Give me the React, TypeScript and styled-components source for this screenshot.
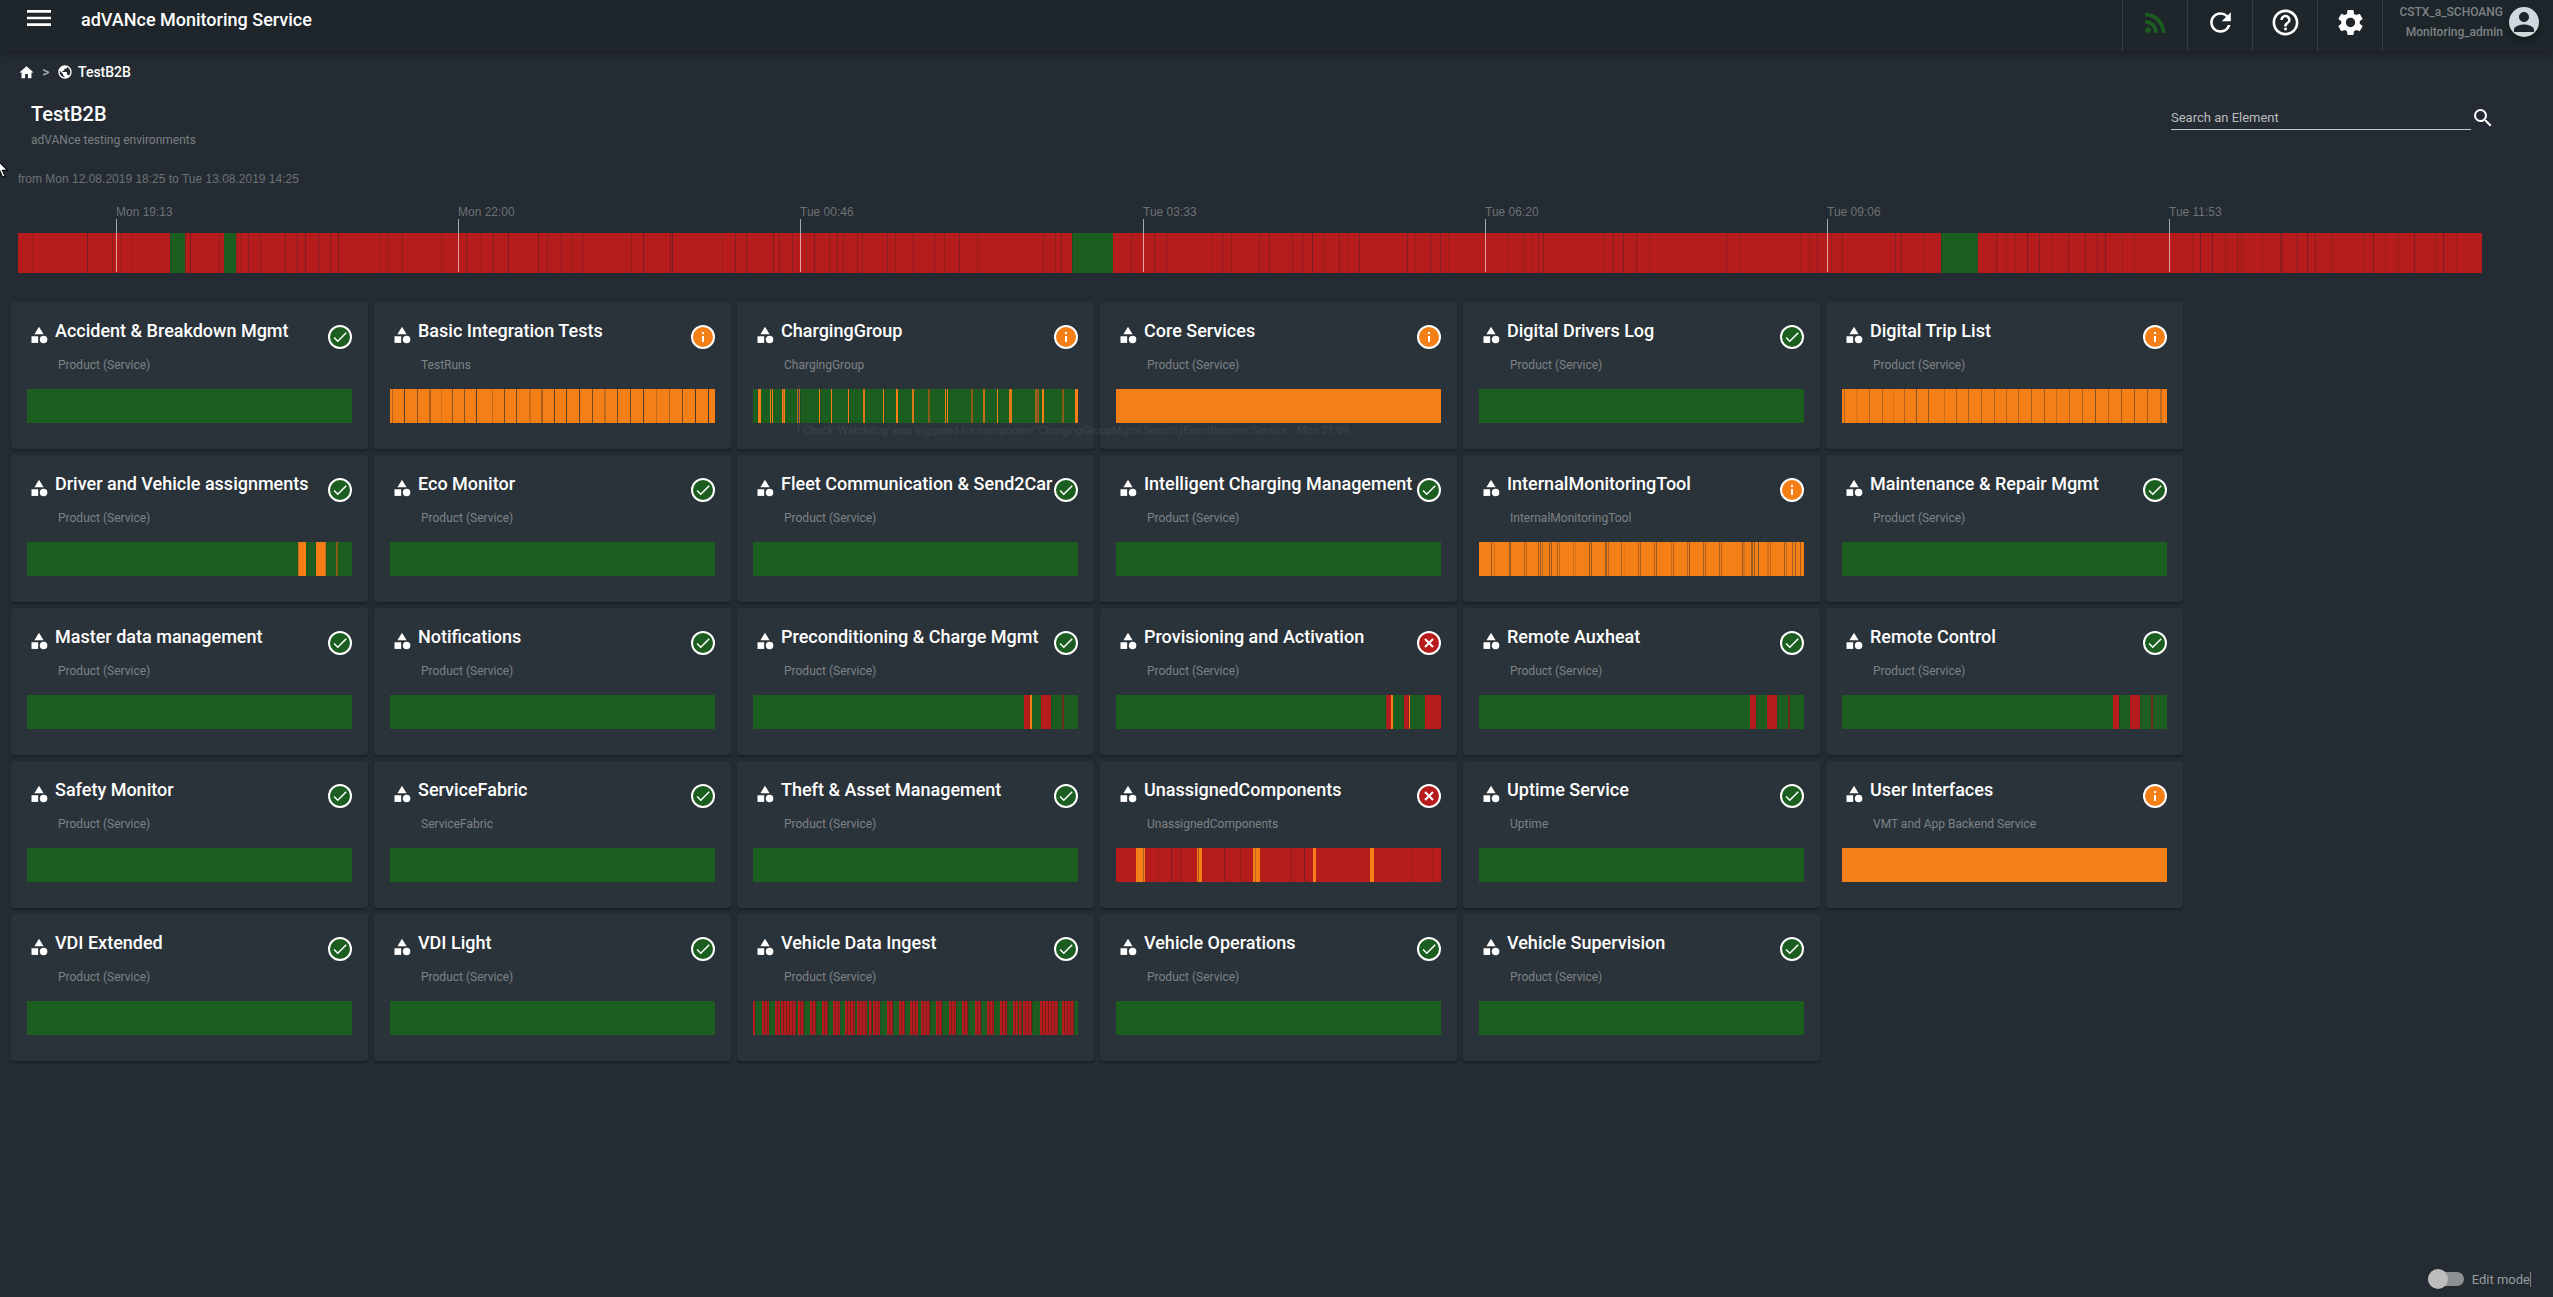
import React from 'react';
import styled, { createGlobalStyle } from 'styled-components';
import {
  MdCategory,
  MdCheck,
  MdHelpOutline,
  MdHome,
  MdMenu,
  MdPerson,
  MdPublic,
  MdRefresh,
  MdRssFeed,
  MdSearch,
  MdSettings,
} from 'react-icons/md';

const GREEN = '#1b5e20';
const RED = '#b71c1c';
const ORANGE = '#f57f17';
const BROWN = '#8a5a1b';
const MAROON = '#6f2a1c';

type Status = 'ok' | 'warn' | 'error';
/** start, width, fill */
type Segment = [number, number, string];
/** position, darkness (0..1), optional width */
type Line = [number, number, number?];

interface Timeline {
  base: string;
  segments?: Segment[];
  lines?: Line[];
}

interface Service {
  name: string;
  type: string;
  status: Status;
  timeline: Timeline;
  note?: string;
}

const GlobalStyle = createGlobalStyle`
  *, *::before, *::after { box-sizing: border-box; }
  body {
    margin: 0;
    background: #242b32;
    color: #fff;
    font-family: Roboto, "Liberation Sans", sans-serif;
    font-size: 14px;
  }
  h1, h2, p { margin: 0; }
  button { font: inherit; color: inherit; background: none; border: 0; padding: 0; cursor: pointer; }
`;

const Page = styled.div`
  position: relative;
  display: flex;
  flex-direction: column;
  min-height: 100vh;
  overflow: hidden;
`;

const Header = styled.header`
  display: flex;
  align-items: flex-start;
  height: 51px;
  padding-left: 23px;
  background: #1e262b;
  box-shadow: 0 2px 10px rgba(0, 0, 0, 0.35);
`;

const MenuButton = styled.button`
  display: flex;
  padding-top: 2px;
`;

const AppTitle = styled.h1`
  flex: 1;
  padding-left: 26px;
  font-size: 18px;
  font-weight: 500;
  line-height: 40px;
`;

const HeaderButton = styled.button<{ $color?: string }>`
  display: flex;
  align-items: center;
  justify-content: center;
  width: 65px;
  height: 51px;
  padding-bottom: 7px;
  border-left: 1px solid #353c41;
  color: ${(p) => p.$color ?? '#fff'};
`;

const UserButton = styled.button`
  display: flex;
  align-items: flex-start;
  justify-content: flex-end;
  gap: 6px;
  width: 171px;
  height: 51px;
  padding: 2px 14px 0 0;
  border-left: 1px solid #353c41;
  color: #7d8285;
  font-size: 12px;
  font-weight: 500;
  line-height: 20px;
  text-align: right;
`;

const UserLine = styled.span`
  display: block;
`;

const Avatar = styled.span`
  display: flex;
  margin-top: 5px;
  width: 30px;
  height: 30px;
  border-radius: 50%;
  background: #cfd8dc;
  color: #1e262b;
  box-shadow: 0 3px 6px rgba(0, 0, 0, 0.4);
`;

const Breadcrumb = styled.nav`
  display: flex;
  align-items: center;
  height: 20px;
  margin: 11px 0 0 18px;
  font-weight: 500;
`;

const Crumb = styled.a`
  display: flex;
  align-items: center;
  gap: 5px;
  color: #fff;
  text-decoration: none;
`;

const CrumbSeparator = styled.span`
  width: 22px;
  text-align: center;
  color: #a9adb0;
  font-size: 14px;
`;

const Intro = styled.section`
  display: flex;
  justify-content: space-between;
  padding: 20px 58px 0 31px;
`;

const PageTitle = styled.h2`
  font-size: 20px;
  font-weight: 500;
  line-height: 24px;
`;

const PageSubtitle = styled.p`
  padding-top: 4px;
  color: #7b8083;
  font-size: 12px;
  line-height: 20px;
`;

const Search = styled.form`
  display: flex;
  align-items: flex-start;
  padding-top: 4px;
`;

const SearchInput = styled.input`
  width: 300px;
  height: 24px;
  padding: 0;
  border: 0;
  border-bottom: 1px solid #c6c9cb;
  border-radius: 0;
  outline: 0;
  background: transparent;
  color: #fff;
  font: 400 13px Roboto, sans-serif;
  &::placeholder { color: #b9bcbe; opacity: 1; }
`;

const SearchButton = styled.button`
  display: flex;
`;

const History = styled.section`
  padding: 19px 71px 0 18px;
  font-family: "Liberation Sans", Arial, sans-serif;
  font-size: 12px;
  line-height: 20px;
  color: #6d7275;
`;

const HistoryChart = styled.div`
  position: relative;
  padding-top: 44px;
`;

const HourMark = styled.div`
  position: absolute;
  top: 13px;
  height: 70px;
  white-space: nowrap;
  &::after {
    content: '';
    position: absolute;
    left: 0;
    top: 17px;
    bottom: 0;
    width: 1px;
    background: rgba(255, 255, 255, 0.6);
  }
`;

const Track = styled.svg<{ $height: number }>`
  display: block;
  width: 100%;
  height: ${(p) => p.$height}px;
`;

const Grid = styled.main`
  display: grid;
  grid-template-columns: repeat(auto-fill, 357px);
  gap: 6px;
  padding: 29px 71px 0 11px;
`;

const Card = styled.article`
  position: relative;
  padding: 16px 16px 26px;
  border-radius: 4px;
  background: #2b333a;
  box-shadow: 0 2px 2px rgba(0, 0, 0, 0.25);
`;

const CardHead = styled.div`
  display: flex;
  align-items: flex-start;
  gap: 6px;
  height: 31px;
  padding-left: 2px;
`;

const CardIcon = styled(MdCategory)`
  flex: none;
  margin-top: 7px;
`;

const CardTitle = styled.h2`
  flex: 1;
  min-width: 0;
  font-size: 18px;
  font-weight: 500;
  line-height: 26px;
  white-space: nowrap;
`;

const CardType = styled.p`
  padding: 6px 0 14px 31px;
  color: #7d8286;
  font-size: 12px;
  line-height: 20px;
`;

const Badge = styled.span<{ $color: string }>`
  display: flex;
  flex: none;
  align-items: center;
  justify-content: center;
  width: 24px;
  height: 24px;
  margin-top: 7px;
  border: 2px solid #fff;
  border-radius: 50%;
  background: ${(p) => p.$color};
`;

const Note = styled.div`
  position: absolute;
  z-index: 1;
  left: 61px;
  top: 83px;
  height: 49px;
  padding: 37px 0 0 4px;
  border-left: 1px solid #3b434a;
  color: #3b434a;
  font: 11px/18px Roboto, "Liberation Sans", sans-serif;
  white-space: nowrap;
  pointer-events: none;
`;

const Footer = styled.footer`
  display: flex;
  justify-content: flex-end;
  margin-top: auto;
  padding: 0 22px 8px;
`;

const Toggle = styled.label`
  display: flex;
  align-items: center;
  gap: 8px;
  height: 20px;
  color: #979b9e;
  font-size: 13px;
`;

const ToggleText = styled.span`
  border-right: 1px solid #7b8083;
`;

const Switch = styled.input`
  appearance: none;
  position: relative;
  width: 36px;
  height: 14px;
  margin: 0;
  border-radius: 7px;
  background: #8b9093;
  &::before {
    content: '';
    position: absolute;
    left: 0;
    top: -3px;
    width: 20px;
    height: 20px;
    border-radius: 50%;
    background: #bdbdbd;
  }
  &:checked::before { left: 16px; }
`;

const Pointer = styled.svg`
  position: absolute;
  left: -5px;
  top: 158px;
  pointer-events: none;
`;

const hourMarks = [
  ['Mon 19:13', 98],
  ['Mon 22:00', 440],
  ['Tue 00:46', 782],
  ['Tue 03:33', 1125],
  ['Tue 06:20', 1467],
  ['Tue 09:06', 1809],
  ['Tue 11:53', 2151],
] as const;

const HISTORY_SPAN = 2464;
const CARD_SPAN = 325;

const history: Timeline = {
  base: RED,
  segments: [
    [152, 15, GREEN],
    [206, 12, GREEN],
    [1054, 41, GREEN],
    [1923, 37, GREEN],
  ],
  lines: [
    [14, 0.15], [69, 0.4], [94, 0.3], [102, 0.2], [114, 0.12], [152, 0.3], [167, 0.3], [172, 0.4], [184, 0.12],
    [201, 0.3], [218, 0.3], [222, 0.2], [230, 0.3], [242, 0.3], [257, 0.08], [267, 0.35], [279, 0.35], [287, 0.4],
    [300, 0.35], [312, 0.3], [320, 0.4], [344, 0.05], [362, 0.2], [370, 0.25], [384, 0.25], [423, 0.25],
    [430, 0.06], [448, 0.35], [462, 0.12], [475, 0.35], [490, 0.4], [520, 0.4], [529, 0.3], [543, 0.3],
    [553, 0.25], [564, 0.3], [613, 0.25], [625, 0.4], [633, 0.1], [652, 0.4], [654, 0.4], [704, 0.2], [717, 0.35],
    [728, 0.35], [739, 0.08], [755, 0.4], [761, 0.35], [774, 0.3], [788, 0.2], [796, 0.4], [811, 0.25], [819, 0.35],
    [825, 0.3], [839, 0.3], [844, 0.2], [869, 0.3], [877, 0.25], [895, 0.3], [916, 0.3], [926, 0.25], [941, 0.35],
    [947, 0.15], [959, 0.25], [1019, 0.12], [1025, 0.3], [1037, 0.25], [1043, 0.35], [1054, 0.3], [1113, 0.3],
    [1136, 0.35], [1148, 0.3], [1194, 0.15], [1204, 0.3], [1213, 0.25], [1227, 0.08], [1241, 0.3], [1251, 0.3],
    [1274, 0.3], [1284, 0.3], [1294, 0.4], [1305, 0.25], [1321, 0.35], [1329, 0.15], [1341, 0.35], [1389, 0.35],
    [1397, 0.15], [1412, 0.35], [1422, 0.3], [1430, 0.2], [1490, 0.2], [1505, 0.25], [1513, 0.15], [1520, 0.3],
    [1525, 0.35], [1537, 0.1], [1585, 0.2], [1595, 0.35], [1605, 0.35], [1618, 0.35], [1631, 0.2], [1684, 0.1],
    [1708, 0.3], [1721, 0.2], [1782, 0.2], [1791, 0.25], [1799, 0.3], [1813, 0.2], [1824, 0.25], [1877, 0.3],
    [1883, 0.35], [1906, 0.2], [1923, 0.4], [1959, 0.3], [1978, 0.35], [1988, 0.2], [1997, 0.2], [2009, 0.4],
    [2021, 0.35], [2034, 0.15], [2050, 0.35], [2067, 0.3], [2079, 0.3], [2087, 0.4], [2104, 0.2], [2116, 0.2],
    [2174, 0.2], [2182, 0.4], [2194, 0.4], [2207, 0.25], [2219, 0.25], [2223, 0.25], [2244, 0.15], [2262, 0.4],
    [2264, 0.3], [2279, 0.35], [2289, 0.4], [2297, 0.35], [2314, 0.25], [2345, 0.2], [2355, 0.4], [2367, 0.15],
    [2380, 0.25], [2396, 0.4], [2405, 0.08], [2417, 0.25], [2425, 0.4], [2438, 0.15],
  ],
};

const ok: Timeline = { base: GREEN };
const warn: Timeline = { base: ORANGE };
const remote: Timeline = {
  base: GREEN,
  segments: [[271, 6, RED], [288, 10, RED], [309, 2, MAROON]],
  lines: [[277, 0.3], [298, 0.35]],
};

const ingestRuns: [number, number][] = [
  [0, 2], [9, 7], [22, 5], [28, 15], [45, 6], [57, 6], [69, 6], [80, 7], [92, 10], [104, 10], [116, 3], [120, 7],
  [134, 6], [146, 6], [157, 8], [168, 9], [183, 6], [196, 7], [209, 6], [222, 6], [234, 7], [247, 7], [260, 5],
  [266, 3], [270, 9], [287, 18], [309, 12],
];

const services: Service[] = [
  { name: 'Accident & Breakdown Mgmt', type: 'Product (Service)', status: 'ok', timeline: ok },
  {
    name: 'Basic Integration Tests', type: 'TestRuns', status: 'warn',
    timeline: {
      base: ORANGE,
      lines: [
        [2, 0.3], [14, 0.7], [27, 0.5], [39, 0.35, 2], [51, 0.15], [62, 0.5], [74, 0.5], [86, 0.7], [102, 0.25],
        [114, 0.6], [126, 0.6], [139, 0.2, 2], [151, 0.35, 2], [164, 0.7], [176, 0.7], [189, 0.7], [202, 0.6],
        [214, 0.25, 2], [227, 0.6], [240, 0.6], [253, 0.7], [266, 0.25], [279, 0.35], [292, 0.6], [305, 0.8], [318, 0.8],
      ],
    },
  },
  {
    name: 'ChargingGroup', type: 'ChargingGroup', status: 'warn',
    note: "Check 'Watchdog' was triggered for component 'ChargingGroupMgmt.SecurityEventReceive.Service' : Mon 21:09",
    timeline: {
      base: GREEN,
      segments: [
        [5, 3, ORANGE], [17, 1, ORANGE], [19, 1, ORANGE], [29, 3, ORANGE], [44, 3, '#c0701b'], [66, 1, ORANGE],
        [78, 1, ORANGE], [95, 1, ORANGE], [110, 2, '#d8761a'], [130, 1, ORANGE], [143, 2, ORANGE], [159, 2, '#d8761a'],
        [175, 2, BROWN], [192, 1, ORANGE], [194, 1, ORANGE], [218, 2, BROWN], [230, 2, '#c0701b'], [244, 1, ORANGE],
        [256, 3, '#e07a19'], [282, 4, '#a3651b'], [289, 2, ORANGE], [309, 2, BROWN], [322, 3, ORANGE],
      ],
      lines: [[4, 0.2], [30, 0.25], [47, 0.3], [67, 0.3], [96, 0.3], [131, 0.3], [284, 0.3]],
    },
  },
  { name: 'Core Services', type: 'Product (Service)', status: 'warn', timeline: warn },
  { name: 'Digital Drivers Log', type: 'Product (Service)', status: 'ok', timeline: ok },
  {
    name: 'Digital Trip List', type: 'Product (Service)', status: 'warn',
    timeline: {
      base: ORANGE,
      lines: [
        [2, 0.3], [14, 0.1, 2], [27, 0.3], [40, 0.3], [51, 0.15], [62, 0.3], [74, 0.5], [86, 0.45], [102, 0.2],
        [114, 0.35], [126, 0.35], [139, 0.35], [152, 0.3], [164, 0.3], [176, 0.3], [189, 0.35], [202, 0.4], [214, 0.25],
        [227, 0.3], [240, 0.35], [253, 0.5], [266, 0.3], [279, 0.4], [292, 0.45], [305, 0.4], [318, 0.25, 2],
      ],
    },
  },
  {
    name: 'Driver and Vehicle assignments', type: 'Product (Service)', status: 'ok',
    timeline: {
      base: GREEN,
      segments: [[271, 8, ORANGE], [289, 10, ORANGE], [309, 2, BROWN]],
      lines: [[271, 0.2], [280, 0.25], [288, 0.3], [298, 0.2]],
    },
  },
  { name: 'Eco Monitor', type: 'Product (Service)', status: 'ok', timeline: ok },
  { name: 'Fleet Communication & Send2Car', type: 'Product (Service)', status: 'ok', timeline: ok },
  { name: 'Intelligent Charging Management', type: 'Product (Service)', status: 'ok', timeline: ok },
  {
    name: 'InternalMonitoringTool', type: 'InternalMonitoringTool', status: 'warn',
    timeline: {
      base: ORANGE,
      lines: [
        [12, 0.4], [15, 0.15], [30, 0.4, 2], [45, 0.35], [47, 0.25], [59, 0.4], [61, 0.4], [63, 0.3], [70, 0.5],
        [72, 0.4], [78, 0.35], [80, 0.25], [94, 0.2], [96, 0.15], [110, 0.45], [112, 0.4], [126, 0.4, 2], [129, 0.3],
        [142, 0.35], [145, 0.1], [159, 0.35], [161, 0.35], [175, 0.35], [177, 0.4], [192, 0.2], [194, 0.35],
        [208, 0.3], [210, 0.45], [224, 0.35], [226, 0.35], [240, 0.35], [242, 0.35], [263, 0.4], [264, 0.15, 2],
        [272, 0.4, 2], [275, 0.4], [279, 0.5], [288, 0.15, 2], [291, 0.25], [305, 0.4], [307, 0.25], [313, 0.35],
        [316, 0.4], [321, 0.4],
      ],
    },
  },
  { name: 'Maintenance & Repair Mgmt', type: 'Product (Service)', status: 'ok', timeline: ok },
  { name: 'Master data management', type: 'Product (Service)', status: 'ok', timeline: ok },
  { name: 'Notifications', type: 'Product (Service)', status: 'ok', timeline: ok },
  {
    name: 'Preconditioning & Charge Mgmt', type: 'Product (Service)', status: 'ok',
    timeline: {
      base: GREEN,
      segments: [[271, 6, RED], [277, 2, ORANGE], [288, 10, RED], [309, 2, MAROON]],
      lines: [[276, 0.2], [298, 0.35]],
    },
  },
  {
    name: 'Provisioning and Activation', type: 'Product (Service)', status: 'error',
    timeline: {
      base: GREEN,
      segments: [[270, 5, RED], [275, 2, ORANGE], [288, 5, RED], [293, 1, ORANGE], [309, 16, RED]],
      lines: [[270, 0.25], [287, 0.3], [292, 0.2]],
    },
  },
  { name: 'Remote Auxheat', type: 'Product (Service)', status: 'ok', timeline: remote },
  { name: 'Remote Control', type: 'Product (Service)', status: 'ok', timeline: remote },
  { name: 'Safety Monitor', type: 'Product (Service)', status: 'ok', timeline: ok },
  { name: 'ServiceFabric', type: 'ServiceFabric', status: 'ok', timeline: ok },
  { name: 'Theft & Asset Management', type: 'Product (Service)', status: 'ok', timeline: ok },
  {
    name: 'UnassignedComponents', type: 'UnassignedComponents', status: 'error',
    timeline: {
      base: RED,
      segments: [[20, 9, ORANGE], [81, 5, ORANGE], [137, 7, ORANGE], [197, 3, ORANGE], [254, 4, ORANGE]],
      lines: [
        [27, 0.35], [42, 0.2], [55, 0.4], [64, 0.3], [82, 0.35], [108, 0.35], [124, 0.25], [139, 0.25], [175, 0.3],
        [188, 0.4], [296, 0.15], [316, 0.15],
      ],
    },
  },
  { name: 'Uptime Service', type: 'Uptime', status: 'ok', timeline: ok },
  { name: 'User Interfaces', type: 'VMT and App Backend Service', status: 'warn', timeline: warn },
  { name: 'VDI Extended', type: 'Product (Service)', status: 'ok', timeline: ok },
  { name: 'VDI Light', type: 'Product (Service)', status: 'ok', timeline: ok },
  {
    name: 'Vehicle Data Ingest', type: 'Product (Service)', status: 'ok',
    timeline: {
      base: GREEN,
      segments: ingestRuns.map(([x, w]): Segment => [x, w, RED]),
      lines: ingestRuns.flatMap(([x, w]) => {
        const lines: Line[] = [[x + w, 0.25]];
        for (let i = 2; i < w; i += 3) lines.push([x + i, 0.4]);
        return lines;
      }),
    },
  },
  { name: 'Vehicle Operations', type: 'Product (Service)', status: 'ok', timeline: ok },
  { name: 'Vehicle Supervision', type: 'Product (Service)', status: 'ok', timeline: ok },
];

function StatusTrack({ timeline, span, height, label }: { timeline: Timeline; span: number; height: number; label: string }) {
  return (
    <Track
      $height={height}
      viewBox={`0 0 ${span} ${height}`}
      preserveAspectRatio="none"
      shapeRendering="crispEdges"
      role="img"
      aria-label={label}
    >
      <rect width={span} height={height} fill={timeline.base} />
      {timeline.segments?.map(([x, w, fill]) => (
        <rect key={`s${x}`} x={x} width={w} height={height} fill={fill} />
      ))}
      {timeline.lines?.map(([x, dark, w = 1], i) => (
        <rect key={`l${i}`} x={x} width={w} height={height} fill="#1e262b" fillOpacity={dark} />
      ))}
    </Track>
  );
}

function StatusBadge({ status }: { status: Status }) {
  if (status === 'ok') {
    return <Badge $color={GREEN}><MdCheck size={18} /></Badge>;
  }
  if (status === 'error') {
    return (
      <Badge $color={RED}>
        <svg width="12" height="12" viewBox="0 0 12 12" stroke="#fff" strokeWidth="2">
          <path d="M2 2l8 8M10 2l-8 8" />
        </svg>
      </Badge>
    );
  }
  return (
    <Badge $color={ORANGE}>
      <svg width="12" height="12" viewBox="0 0 12 12" fill="#fff">
        <rect x="5" y="1" width="2" height="2" />
        <rect x="5" y="5" width="2" height="6" />
      </svg>
    </Badge>
  );
}

function ServiceCard({ service }: { service: Service }) {
  return (
    <Card>
      <CardHead>
        <CardIcon size={20} />
        <CardTitle>{service.name}</CardTitle>
        <StatusBadge status={service.status} />
      </CardHead>
      <CardType>{service.type}</CardType>
      <StatusTrack timeline={service.timeline} span={CARD_SPAN} height={34} label={`${service.name} history`} />
      {service.note && <Note>{service.note}</Note>}
    </Card>
  );
}

export default function App() {
  return (
    <Page>
      <GlobalStyle />
      <Header>
        <MenuButton aria-label="Menu"><MdMenu size={32} /></MenuButton>
        <AppTitle>adVANce Monitoring Service</AppTitle>
        <HeaderButton aria-label="Live feed" $color={GREEN}><MdRssFeed size={31} /></HeaderButton>
        <HeaderButton aria-label="Refresh"><MdRefresh size={31} /></HeaderButton>
        <HeaderButton aria-label="Help"><MdHelpOutline size={31} /></HeaderButton>
        <HeaderButton aria-label="Settings"><MdSettings size={31} /></HeaderButton>
        <UserButton>
          <span>
            <UserLine>CSTX_a_SCHOANG</UserLine>
            <UserLine>Monitoring_admin</UserLine>
          </span>
          <Avatar><MdPerson size={30} /></Avatar>
        </UserButton>
      </Header>

      <Breadcrumb aria-label="Breadcrumb">
        <Crumb href="#home" aria-label="Home"><MdHome size={17} /></Crumb>
        <CrumbSeparator>&gt;</CrumbSeparator>
        <Crumb href="#testb2b"><MdPublic size={16} />TestB2B</Crumb>
      </Breadcrumb>

      <Intro>
        <div>
          <PageTitle>TestB2B</PageTitle>
          <PageSubtitle>adVANce testing environments</PageSubtitle>
        </div>
        <Search onSubmit={(e) => e.preventDefault()}>
          <SearchInput aria-label="Search an Element" placeholder="Search an Element" />
          <SearchButton aria-label="Search"><MdSearch size={24} /></SearchButton>
        </Search>
      </Intro>

      <History>
        <p>from Mon 12.08.2019 18:25 to Tue 13.08.2019 14:25</p>
        <HistoryChart>
          <StatusTrack timeline={history} span={HISTORY_SPAN} height={40} label="TestB2B history" />
          {hourMarks.map(([label, x]) => (
            <HourMark key={label} style={{ left: `${(x / HISTORY_SPAN) * 100}%` }}>{label}</HourMark>
          ))}
        </HistoryChart>
      </History>

      <Grid>
        {services.map((service) => (
          <ServiceCard key={service.name} service={service} />
        ))}
      </Grid>

      <Footer>
        <Toggle>
          <Switch type="checkbox" role="switch" />
          <ToggleText>Edit mode</ToggleText>
        </Toggle>
      </Footer>

      <Pointer width="14" height="21" viewBox="0 0 12 19">
        <path d="M1 1v14l3.2-3 2.4 5.4 2.2-1-2.4-5.2H11z" fill="#fff" stroke="#000" />
      </Pointer>
    </Page>
  );
}
